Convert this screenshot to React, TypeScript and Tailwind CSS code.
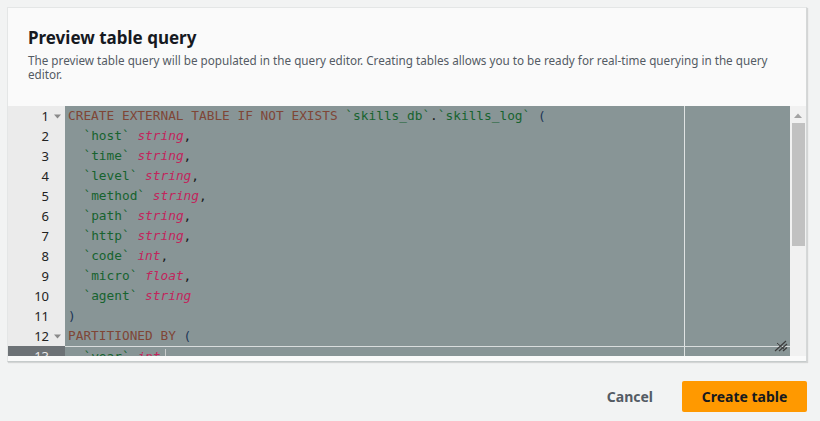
const lines: { n: number; fold?: boolean; parts: [string, string][] }[] = [
  {
    n: 1,
    fold: true,
    parts: [
      ["kw", "CREATE EXTERNAL TABLE IF NOT EXISTS "],
      ["id", "`skills_db`"],
      ["p", "."],
      ["id", "`skills_log`"],
      ["p", " "],
      ["paren", "("],
    ],
  },
  { n: 2, parts: [["p", "  "], ["id", "`host`"], ["p", " "], ["ty", "string"], ["p", ","]] },
  { n: 3, parts: [["p", "  "], ["id", "`time`"], ["p", " "], ["ty", "string"], ["p", ","]] },
  { n: 4, parts: [["p", "  "], ["id", "`level`"], ["p", " "], ["ty", "string"], ["p", ","]] },
  { n: 5, parts: [["p", "  "], ["id", "`method`"], ["p", " "], ["ty", "string"], ["p", ","]] },
  { n: 6, parts: [["p", "  "], ["id", "`path`"], ["p", " "], ["ty", "string"], ["p", ","]] },
  { n: 7, parts: [["p", "  "], ["id", "`http`"], ["p", " "], ["ty", "string"], ["p", ","]] },
  { n: 8, parts: [["p", "  "], ["id", "`code`"], ["p", " "], ["ty", "int"], ["p", ","]] },
  { n: 9, parts: [["p", "  "], ["id", "`micro`"], ["p", " "], ["ty", "float"], ["p", ","]] },
  { n: 10, parts: [["p", "  "], ["id", "`agent`"], ["p", " "], ["ty", "string"]] },
  { n: 11, parts: [["paren", ")"]] },
  { n: 12, fold: true, parts: [["kw", "PARTITIONED BY "], ["paren", "("]] },
  { n: 13, parts: [["p", "  "], ["id", "`year`"], ["p", " "], ["ty", "int"]] },
];

const tokenStyle: Record<string, string> = {
  kw: "text-[#7f4636]",
  id: "text-[#17632f]",
  ty: "text-[#c2255c] italic",
  paren: "text-[#1d3557]",
  p: "text-[#1b1b1b]",
};

function FoldArrow() {
  return (
    <svg width="7" height="5" viewBox="0 0 7 5" className="ml-[5px]">
      <path d="M0 0.5 L7 0.5 L3.5 4.5 Z" fill="#8a8a8a" />
    </svg>
  );
}

export default function App() {
  return (
    <div className="min-h-screen bg-[#f2f3f3] font-['Noto_Sans',sans-serif]">
      <div className="pt-[7px] pr-[13px] pl-[7px]">

        <div className="border border-[#e4e6e6] border-r-[#d5d8d8] border-b-[#c6cbcb] bg-[#fafafa] shadow-[1px_1px_1px_rgba(0,0,0,0.12)]">

          <div className="h-[98px] px-5 pt-[19px]">
            <h2 className="text-[17px] font-bold leading-[22px] text-[#16191f]">
              Preview table query
            </h2>
            <p className="mt-[4px] text-[11.7px] leading-[14px] text-[#545b64]">
              The preview table query will be populated in the query editor. Creating tables allows you to be ready for real-time querying in the query editor.
            </p>
          </div>

          <div className="flex h-[250px] overflow-hidden font-['DejaVu_Sans_Mono',monospace] text-[12.8px] leading-[20px]">

            <div className="w-[57px] shrink-0 bg-[#ebebeb] text-[#222]">
              {lines.map((line) => (
                <div
                  key={line.n}
                  className={`flex h-[20px] items-center ${
                    line.n === 13 ? "bg-[#6d7276] text-[#e9e9e9]" : ""
                  }`}
                >
                  <span className="w-[41px] text-right font-['Noto_Sans',sans-serif] text-[13px]">
                    {line.n}
                  </span>
                  {line.fold && <FoldArrow />}
                </div>
              ))}
            </div>

            <div className="relative flex-1 bg-[#889596]">
              <div className="absolute top-0 bottom-0 left-[619px] w-px bg-[#dfe3e3]" />
              {lines.map((line) => (
                <div
                  key={line.n}
                  className={`relative h-[20px] whitespace-pre pl-[3px] ${
                    line.n === 13 ? "border-t border-[#d9dddd]" : ""
                  }`}
                >
                  {line.parts.map(([t, s], i) => (
                    <span key={i} className={tokenStyle[t]}>
                      {s}
                    </span>
                  ))}
                  {line.n === 13 && (
                    <span className="ml-[4px] inline-block h-[18px] w-px bg-[#c9cccc] align-middle" />
                  )}
                </div>
              ))}
              <div className="absolute right-[2px] bottom-[4px]">
                <svg width="14" height="12" viewBox="0 0 14 12">
                  <path d="M1 11 L12 1 M5 11 L13 4 M9 11 L13 7.5" stroke="#3c3c3c" strokeWidth="1.2" />
                  <path d="M3 3 L11 10" stroke="#3c3c3c" strokeWidth="1" />
                </svg>
              </div>
            </div>

            <div className="flex w-[16px] shrink-0 flex-col items-center bg-[#f1f1f1]">
              <svg width="8" height="5" viewBox="0 0 8 5" className="mt-[7px]">
                <path d="M0 5 L4 0.5 L8 5 Z" fill="#a3a3a3" />
              </svg>
              <div className="mt-[5px] h-[123px] w-[13px] bg-[#c1c1c1]" />
            </div>

          </div>

          <div className="h-[5px]" />

        </div>

        <div className="mt-[19px] flex items-center justify-end gap-[29px]">
          <button className="text-[14px] font-bold text-[#545b64]">
            Cancel
          </button>
          <button className="h-[31px] w-[125px] rounded-[2px] bg-[#ff9900] text-[14px] font-bold text-[#16191f]">
            Create table
          </button>
        </div>

      </div>
    </div>
  );
}
